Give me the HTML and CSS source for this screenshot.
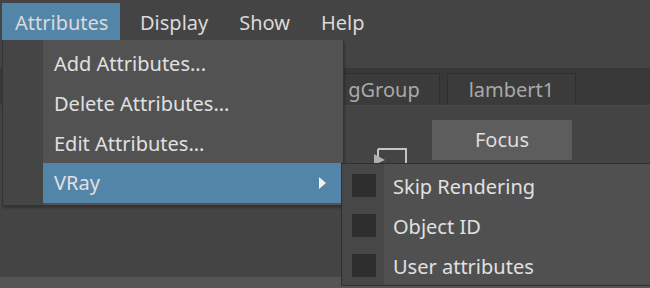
FILE: index.html
```html
<!DOCTYPE html>
<html>
<head>
<meta charset="utf-8">
<link rel="stylesheet" href="styles.css">
</head>
<body>
<div class="app">
  <div class="menubar">
    <div class="mb-item active">Attributes</div>
    <div class="mb-item">Display</div>
    <div class="mb-item">Show</div>
    <div class="mb-item">Help</div>
  </div>
  <div class="toolstrip"></div>
  <div class="tabs">
    <div class="tab tab-first">gGroup</div>
    <div class="tab tab-second">lambert1</div>
  </div>
  <div class="content">
    <div class="focus-row">
      <div class="focus-btn">Focus</div>
    </div>
    <svg class="corner-icon" width="36" height="20" viewBox="0 0 36 20">
      <path d="M5 2 H33 V20" fill="none" stroke="#c4c4c4" stroke-width="2"/>
      <path d="M5 2 V10" fill="none" stroke="#c4c4c4" stroke-width="2"/>
      <polygon points="1,7 1,18 12,13" fill="#b0b0b0"/>
    </svg>
    <div class="spacer"></div>
    <div class="bottom-strip"></div>
  </div>

  <div class="dropdown">
    <div class="dd-strip"></div>
    <div class="dd-list">
      <div class="dd-item">Add Attributes...</div>
      <div class="dd-item">Delete Attributes...</div>
      <div class="dd-item">Edit Attributes...</div>
      <div class="dd-item hl"><span>VRay</span><span class="arrow"></span></div>
    </div>
  </div>

  <div class="submenu">
    <div class="sub-item"><span class="check"></span><span class="sub-label">Skip Rendering</span></div>
    <div class="sub-item"><span class="check"></span><span class="sub-label">Object ID</span></div>
    <div class="sub-item"><span class="check"></span><span class="sub-label">User attributes</span></div>
  </div>
</div>
</body>
</html>
```
FILE: styles.css
```css
* { box-sizing: border-box; }
html, body {
  margin: 0;
  padding: 0;
  background: #444444;
  width: 650px;
  height: 288px;
  overflow: hidden;
}
.app {
  position: relative;
  width: 650px;
  height: 288px;
  font-family: "Noto Sans", "Open Sans", sans-serif;
  color: #dcdcdc;
  font-size: 20px;
  display: flex;
  flex-direction: column;
}
.menubar {
  height: 40px;
  display: flex;
  align-items: flex-end;
  padding-left: 2px;
  background: #444444;
  gap: 11px;
}
.mb-item {
  height: 37px;
  line-height: 40px;
  padding: 0 10px;
  color: #dadada;
}
.mb-item.active {
  background: #5285a8;
  width: 118px;
  padding-left: 13px;
  padding-right: 0;
  margin-right: -1px;
}
.toolstrip {
  height: 28px;
  background: #444444;
}
.tabs {
  height: 37px;
  background: #383838;
  display: flex;
  align-items: flex-end;
  padding-left: 300px;
  gap: 7px;
}
.tab {
  height: 32px;
  border: 1px solid #2f2f2f;
  border-bottom: none;
  background: #3b3b3b;
  color: #a9a9a9;
  line-height: 32px;
  text-align: center;
}
.tab-first { width: 140px; padding-left: 28px; }
.tab-second { width: 129px; }
.content {
  flex: 1;
  position: relative;
  display: flex;
  flex-direction: column;
  background: #444444;
  border-top: 1px solid #4a4a4a;
}
.focus-row {
  padding-top: 14px;
  padding-left: 432px;
}
.focus-btn {
  width: 140px;
  height: 40px;
  background: #5d5d5d;
  line-height: 40px;
  text-align: center;
  color: #dedede;
}
.corner-icon {
  position: absolute;
  left: 373px;
  top: 41px;
}
.spacer { flex: 1; }
.bottom-strip {
  height: 11px;
  background: #555555;
}
.dropdown {
  position: absolute;
  left: 2px;
  top: 40px;
  width: 342px;
  height: 166px;
  background: #474747;
  border: 1px solid #333333;
  border-top: none;
  display: flex;
  box-shadow: 1px 2px 2px rgba(0,0,0,0.25);
}
.dd-strip {
  width: 40px;
  background: #454545;
}
.dd-list {
  flex: 1;
  background: #525252;
  padding-top: 3px;
  display: flex;
  flex-direction: column;
}
.dd-item {
  height: 40px;
  line-height: 42px;
  padding-left: 11px;
  color: #e0e0e0;
}
.dd-item.hl {
  background: #5285a8;
  display: flex;
  justify-content: space-between;
  align-items: center;
  padding-right: 16px;
  margin-right: 1px;
}
.arrow {
  width: 0;
  height: 0;
  border-top: 6px solid transparent;
  border-bottom: 6px solid transparent;
  border-left: 7px solid #f0f0f0;
}
.submenu {
  position: absolute;
  left: 341px;
  top: 163px;
  width: 309px;
  height: 123px;
  background: linear-gradient(to right, #474747 0, #474747 42px, #505050 42px);
  border: 1px solid #303030;
  border-right: none;
  padding-top: 2px;
  display: flex;
  flex-direction: column;
}
.sub-item {
  height: 40px;
  display: flex;
  align-items: center;
}
.check {
  width: 24px;
  height: 23px;
  background: #2e2e2e;
  margin-left: 10px;
  margin-right: 17px;
}
.sub-label {
  color: #e0e0e0;
  padding-top: 2px;
}
```
